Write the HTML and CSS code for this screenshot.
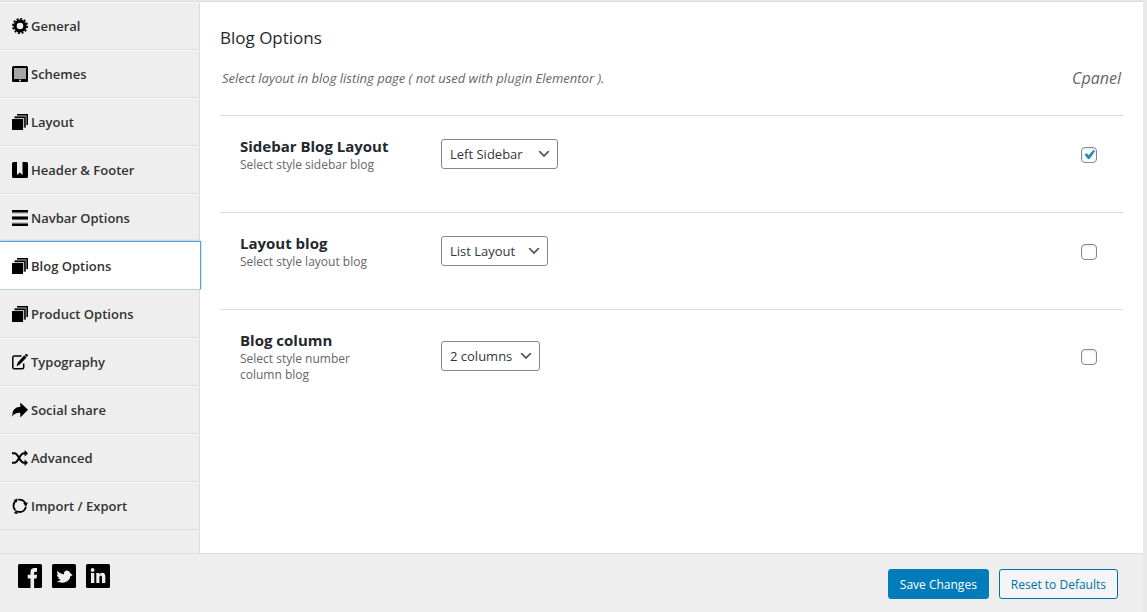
FILE: index.html
```html
<!DOCTYPE html>
<html lang="en">
<head>
  <meta charset="UTF-8" />
  <meta name="viewport" content="width=device-width, initial-scale=1.0" />
  <title>Theme Options</title>
  <link rel="stylesheet" href="styles.css">
</head>
<body>
  <svg class="sprite" aria-hidden="true">
    <symbol id="icon-layers" viewBox="0 0 16 16">
      <path fill="#bbb" d="M5 0h11v11h-2v3h-3V5H2V2h3z" />
      <path d="M5 0h11v11h-1.500V1.500H5z" />
      <path d="M2.700 2.400h11v11h-1.500V3.900h-9.500z" />
      <path d="M0 5h11v11H0z" />
    </symbol>
  </svg>

  <form class="panel">
    <div class="body">
      <nav class="sidebar">
        <ul class="menu">
          <li><a href="#general">
            <svg class="icon" viewBox="0 0 16 16"><circle cx="8" cy="8" r="4.900" fill="none" stroke="#000" stroke-width="3.200" /><circle cx="8" cy="8" r="7.100" fill="none" stroke="#000" stroke-width="1.800" stroke-dasharray="2.100 1.617" /></svg>
            General</a></li>
          <li><a href="#schemes">
            <svg class="icon" viewBox="0 0 16 16"><rect width="16" height="16" rx="1.500" /><path fill="#a5a5a5" d="M2 2h12v11H2z" /><circle cx="8" cy="14.500" r="1" fill="#eee" /></svg>
            Schemes</a></li>
          <li><a href="#layout"><svg class="icon"><use href="#icon-layers" /></svg> Layout</a></li>
          <li><a href="#header">
            <svg class="icon" viewBox="0 0 16 16"><path d="M1.500 0H5v13l2.700-2.500L10.500 13V0h4A1.500 1.500 0 0 1 16 1.500v13a1.500 1.500 0 0 1-1.500 1.500h-13A1.500 1.500 0 0 1 0 14.500v-13A1.500 1.500 0 0 1 1.500 0z" /></svg>
            Header &amp; Footer</a></li>
          <li><a href="#navbar">
            <svg class="icon" viewBox="0 0 16 16"><path fill="#c8c8c8" d="M0 3h16v10H0z" /><path fill="#eee" d="M0 4h16v2H0zM0 10h16v2H0z" /><path d="M0 0h16v2H0zM0 7h16v2H0zM0 14h16v2H0z" /><path fill="#666" d="M0 2h16v1H0zM0 6h16v1H0zM0 9h16v1H0zM0 13h16v1H0z" /></svg>
            Navbar Options</a></li>
          <li class="active"><a href="#blog"><svg class="icon"><use href="#icon-layers" /></svg> Blog Options</a></li>
          <li><a href="#product"><svg class="icon"><use href="#icon-layers" /></svg> Product Options</a></li>
          <li><a href="#typography">
            <svg class="icon" viewBox="0 0 16 16"><path fill="none" stroke="#000" stroke-width="1.500" d="M9.500 2H2.300Q.8 2 .8 3.500v9.700q0 1.500 1.500 1.500h7.900q1.500 0 1.500-1.500V9.500" /><path d="M12.300 1.300l2.200 2.100-6.700 7.100-3.300 1.800 1.200-3.900zM13.100.6q1.300-1.200 2.300-.3t0 2.200l-.3.400-2.200-2z" /></svg>
            Typography</a></li>
          <li><a href="#social">
            <svg class="icon" viewBox="0 0 16 16"><path d="M8.300.5L16 7.800l-7.700 7.600v-4.500Q3 10.500.2 14.500-.3 5.200 8.300 4.800z" /></svg>
            Social share</a></li>
          <li><a href="#advanced">
            <svg class="icon" viewBox="0 0 16 16"><path fill="none" stroke="#000" stroke-width="2" d="M0 3.200h2.500C6.500 3.200 7.500 12.800 12 12.800h1.500M0 12.800h2.500C6.500 12.800 7.500 3.200 12 3.200h1.500" /><path d="M12.600 0L16 3.200l-3.400 3.200zM12.600 9.600l3.400 3.200-3.400 3.200z" /></svg>
            Advanced</a></li>
          <li><a href="#import">
            <svg class="icon" viewBox="0 0 16 16"><circle cx="7.700" cy="7.800" r="6.200" fill="none" stroke="#000" stroke-width="1.800" stroke-dasharray="11.500 1.485" stroke-dashoffset="-1" /><path d="M11.200 5l4.800-.4-2.200 3.800zM4.300 12.100l1.600 3.900-4-.8zM1.600 2L5.800.4 4.600 4.400z" /></svg>
            Import / Export</a></li>
        </ul>
      </nav>

      <main class="content">
        <h1>Blog Options</h1>
        <div class="intro">
          <p>Select layout in blog listing page ( not used with plugin Elementor ).</p>
          <span class="cpanel">Cpanel</span>
        </div>

        <div class="field">
          <div class="field-label">
            <label for="sidebar-layout">Sidebar Blog Layout</label>
            <p>Select style sidebar blog</p>
          </div>
          <select id="sidebar-layout">
            <option>Left Sidebar</option>
            <option>Right Sidebar</option>
          </select>
          <input type="checkbox" aria-label="Show Sidebar Blog Layout in Cpanel" checked />
        </div>

        <div class="field">
          <div class="field-label">
            <label for="blog-layout">Layout blog</label>
            <p>Select style layout blog</p>
          </div>
          <select id="blog-layout">
            <option>List Layout</option>
            <option>Grid Layout</option>
          </select>
          <input type="checkbox" aria-label="Show Layout blog in Cpanel" />
        </div>

        <div class="field">
          <div class="field-label">
            <label for="blog-column">Blog column</label>
            <p>Select style number column blog</p>
          </div>
          <select id="blog-column">
            <option>2 columns</option>
            <option>3 columns</option>
          </select>
          <input type="checkbox" aria-label="Show Blog column in Cpanel" />
        </div>
      </main>
    </div>

    <footer class="footer">
      <div class="social">
        <a href="#facebook" aria-label="Facebook">
          <svg viewBox="0 0 24 24"><rect width="24" height="24" rx="1.500" /><path fill="#eee" d="M12.500 24v-9.500H9.700v-3.700h2.800V8.200q0-4.200 4.300-4.200H19v3.700h-1.500q-1.400 0-1.400 1.300v1.800H19l-.4 3.700h-2.500V24z" /></svg>
        </a>
        <a href="#twitter" aria-label="Twitter">
          <svg viewBox="0 0 24 24"><rect width="24" height="24" rx="1.500" /><path fill="#eee" d="M5.300 7q3 3 6.500 3.500-.2-3.800 3.200-4.100 2.600 0 3.200 2.600l2.500 2.300-2.400.9q-.4 3.800-4 5.600-4.900 2-9.600-.6 2.900-.1 4.100-1.500-2.300-.3-2.900-1.900h1.300Q5 12.800 4.600 10.500l1.500.4Q4.500 9 5.300 7z" /></svg>
        </a>
        <a href="#linkedin" aria-label="LinkedIn">
          <svg viewBox="0 0 24 24"><rect width="24" height="24" rx="1.500" /><circle cx="6.600" cy="6" r="1.900" fill="#eee" /><path fill="#eee" d="M5 9h3.300v10H5zM10.300 9h3.100v1.400Q14.400 8.700 16.300 8.700q3 0 3 4V19H16v-5.800q0-1.800-1.200-1.800-1.400 0-1.400 1.900V19h-3.100z" /></svg>
        </a>
      </div>
      <div class="actions">
        <button type="submit" class="btn btn-primary">Save Changes</button>
        <button type="reset" class="btn">Reset to Defaults</button>
      </div>
    </footer>
  </form>
</body>
</html>
```

FILE: styles.css
```css
* {
  box-sizing: border-box;
}
body {
  margin: 0;
  padding: 1px 4px 0 0;
  background: #e8e8e8;
  color: #23282d;
  font-family: "Open Sans", "Noto Sans", sans-serif;
  font-size: 13px;
}
h1, p, ul {
  margin: 0;
  padding: 0;
}
.sprite {
  display: none;
}
.panel {
  display: flex;
  flex-direction: column;
  min-height: calc(100vh - 1px);
  border-top: 1px solid #ddd;
  background: #eee;
}
.body {
  display: flex;
  flex: 1;
}

/* sidebar */
.sidebar {
  width: 200px;
  flex-shrink: 0;
  border-right: 1px solid #ddd;
}
.menu {
  list-style: none;
}
.menu li {
  height: 48px;
  margin-right: 1px;
  border-top: 1px solid #f9f9f9;
  border-bottom: 1px solid #ddd;
}
.menu a {
  display: flex;
  align-items: center;
  gap: 3px;
  height: 100%;
  padding-left: 12px;
  color: #333;
  font-weight: 600;
  text-decoration: none;
}
.icon {
  width: 16px;
  height: 16px;
  overflow: visible;
}
.menu .active {
  margin: -1px -2px 0 0;
  height: 49px;
  border-top: 0;
  background: #fff;
  position: relative;
}
.menu .active a {
  border-top: 1px solid #5b9dd9;
  border-right: 1px solid #5b9dd9;
  box-shadow: 0 0 2px rgba(30, 140, 190, 0.6);
}

/* options */
.content {
  flex: 1;
  padding: 24px 20px;
  background: #fff;
}
h1 {
  font-size: 17px;
  font-weight: 500;
  line-height: 24px;
}
.intro {
  display: flex;
  justify-content: space-between;
  align-items: center;
  padding: 16px 2px 24px;
  color: #666;
  font-style: italic;
  line-height: 25px;
}
.cpanel {
  font-size: 16px;
}
.field {
  display: flex;
  align-items: center;
  padding: 21px 26px 39px 20px;
  border-top: 1px solid #ddd;
}
.field-label {
  width: 150px;
  margin-right: 51px;
}
.field-label label {
  display: block;
  margin-bottom: 2px;
  font-size: 15px;
  font-weight: 700;
  line-height: 18px;
  white-space: nowrap;
}
.field-label p {
  color: #666;
  font-size: 12px;
  line-height: 16px;
}
select {
  appearance: none;
  height: 30px;
  padding: 0 26px 0 8px;
  margin-bottom: 2px;
  border: 1px solid #7e8993;
  border-radius: 3px;
  background: #fff url("data:image/svg+xml,%3Csvg xmlns='http://www.w3.org/2000/svg' viewBox='0 0 20 20'%3E%3Cpath d='M5 6l5 5 5-5 2 1-7 7-7-7 2-1z' fill='%23555'/%3E%3C/svg%3E") no-repeat right 5px center / 16px 16px;
  color: #32373c;
  font-family: inherit;
  font-size: 13px;
}
input[type="checkbox"] {
  appearance: none;
  width: 16px;
  height: 16px;
  margin: 0 0 0 auto;
  border: 1px solid #7e8993;
  border-radius: 4px;
  background: #fff;
  box-shadow: inset 0 1px 2px rgba(0, 0, 0, 0.1);
}
input[type="checkbox"]:checked {
  background: #fff url("data:image/svg+xml,%3Csvg xmlns='http://www.w3.org/2000/svg' viewBox='0 0 20 20'%3E%3Cpath d='M14.830 4.890l1.340.94-5.810 8.380H9.020L5.780 9.670l1.340-1.250 2.570 2.400z' fill='%231e8cbe' stroke='%231e8cbe'/%3E%3C/svg%3E") no-repeat center / 18px 18px;
}

/* footer */
.footer {
  display: flex;
  justify-content: space-between;
  padding: 10px 25px 13px 18px;
  border-top: 1px solid #ddd;
}
.social {
  display: flex;
  gap: 10px;
}
.social a, .social svg {
  display: block;
  width: 24px;
  height: 24px;
}
.actions {
  display: flex;
  gap: 10px;
  padding-top: 5px;
}
.btn {
  height: 30px;
  padding: 0 11px;
  border: 1px solid #0071a1;
  border-radius: 3px;
  background: #f3f5f6;
  color: #0071a1;
  font-family: inherit;
  font-size: 12px;
  white-space: nowrap;
  cursor: pointer;
}
.btn-primary {
  border-color: #007cba;
  background: #007cba;
  color: #fff;
}
```
